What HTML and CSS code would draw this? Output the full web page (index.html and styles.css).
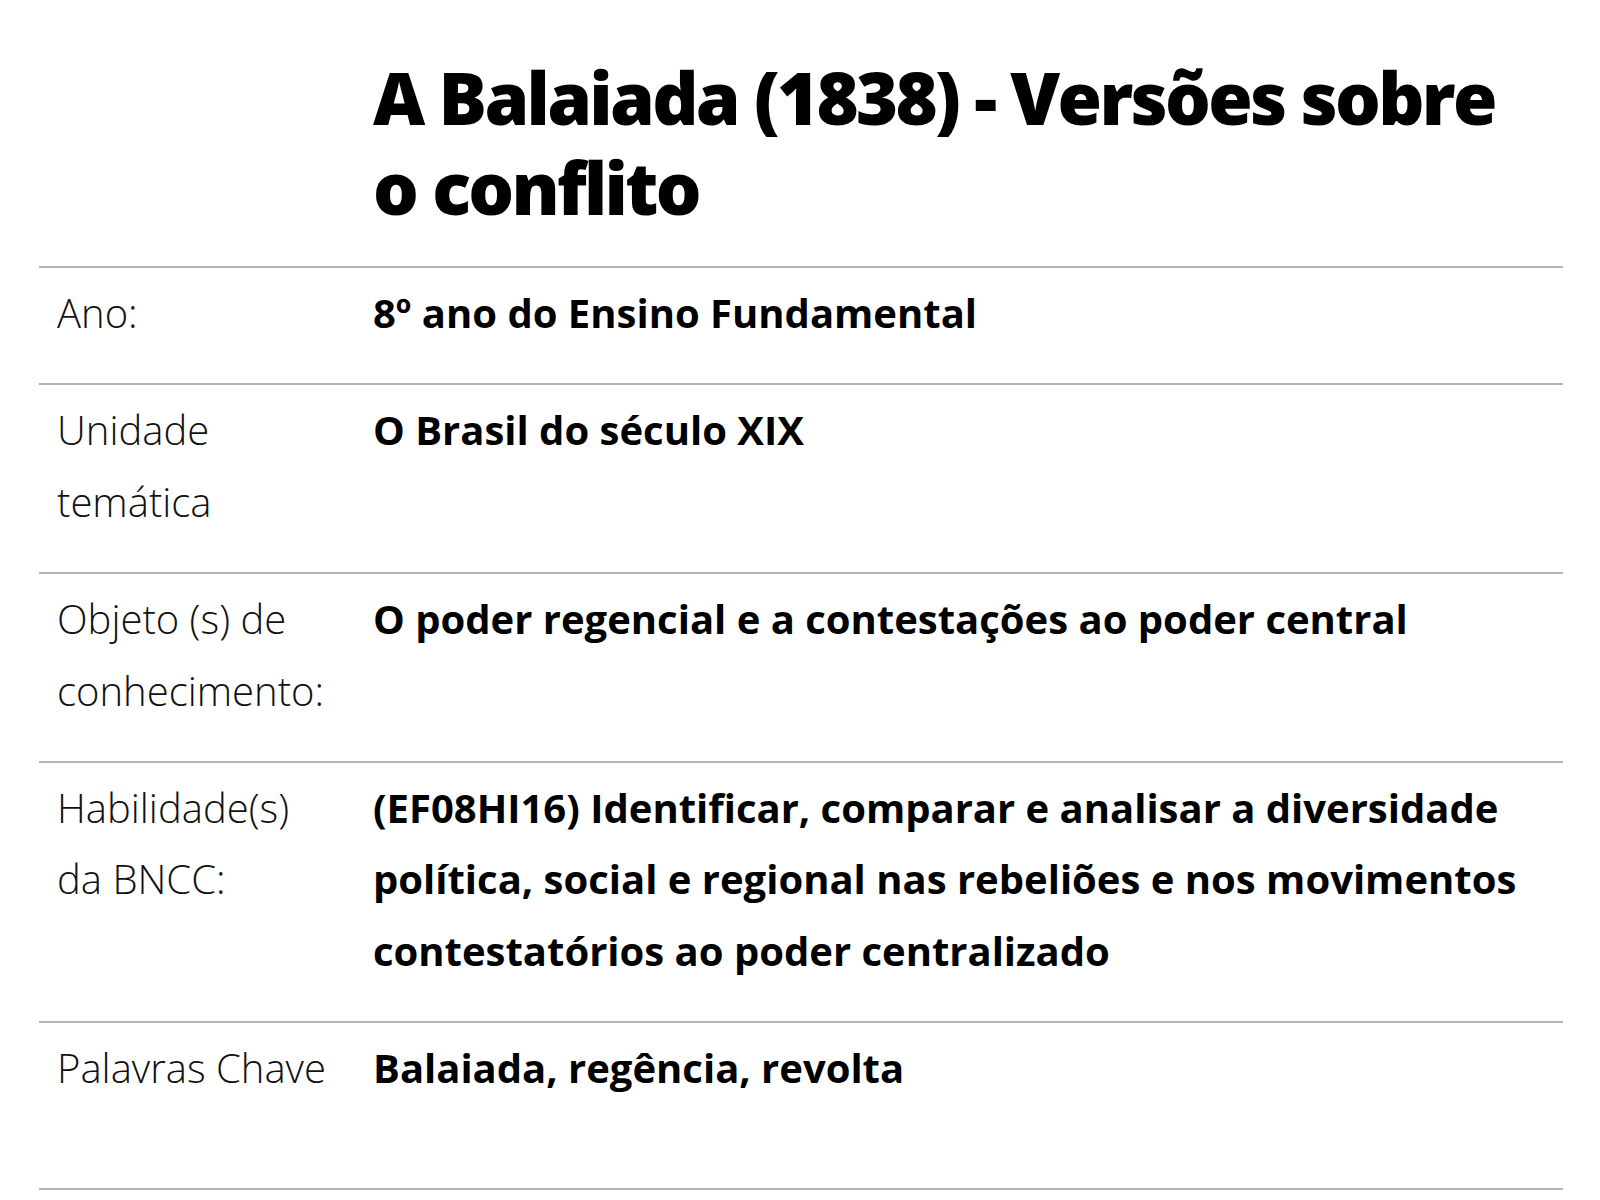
FILE: index.html
```html
<!DOCTYPE html>
<html lang="pt-BR">
<head>
<meta charset="utf-8">
<title>A Balaiada (1838) - Versões sobre o conflito</title>
<link rel="stylesheet" href="styles.css">
</head>
<body>
<main class="sheet">
  <div class="row row-head">
    <div class="label"></div>
    <h1 class="title">A Balaiada (1838) - Versões sobre o conflito</h1>
  </div>
  <div class="row">
    <div class="label">Ano:</div>
    <div class="value">8º ano do Ensino Fundamental</div>
  </div>
  <div class="row">
    <div class="label">Unidade temática</div>
    <div class="value">O Brasil do século XIX</div>
  </div>
  <div class="row">
    <div class="label">Objeto (s) de conhecimento:</div>
    <div class="value">O poder regencial e a contestações ao poder central</div>
  </div>
  <div class="row">
    <div class="label">Habilidade(s) da BNCC:</div>
    <div class="value">(EF08HI16) Identificar, comparar e analisar a diversidade política, social e regional nas rebeliões e nos movimentos contestatórios ao poder centralizado</div>
  </div>
  <div class="row row-last">
    <div class="label">Palavras Chave</div>
    <div class="value">Balaiada, regência, revolta</div>
  </div>
</main>
</body>
</html>
```

FILE: styles.css
```css
html, body {
  margin: 0;
  padding: 0;
  background: #ffffff;
}

body {
  font-family: "Open Sans", "Liberation Sans", sans-serif;
  color: #000;
}

.sheet {
  margin-left: 39px;
  width: 1524px;
}

.row {
  display: grid;
  grid-template-columns: 334px 1fr;
  border-bottom: 2px solid #b4b4b4;
  padding: 9px 0 35px 0;
  font-size: 40px;
  line-height: 71.4px;
}

.row-head {
  padding: 52px 0 34px 0;
}

.row-last {
  padding-bottom: 84px;
}

.label {
  padding-left: 18px;
  padding-right: 36px;
  font-weight: 300;
  color: #111;
}

.value {
  font-weight: 700;
  padding-right: 40px;
}

.title {
  margin: 0;
  font-size: 72px;
  line-height: 90px;
  font-weight: 800;
  letter-spacing: -2.7px;
  padding-right: 40px;
}
```
